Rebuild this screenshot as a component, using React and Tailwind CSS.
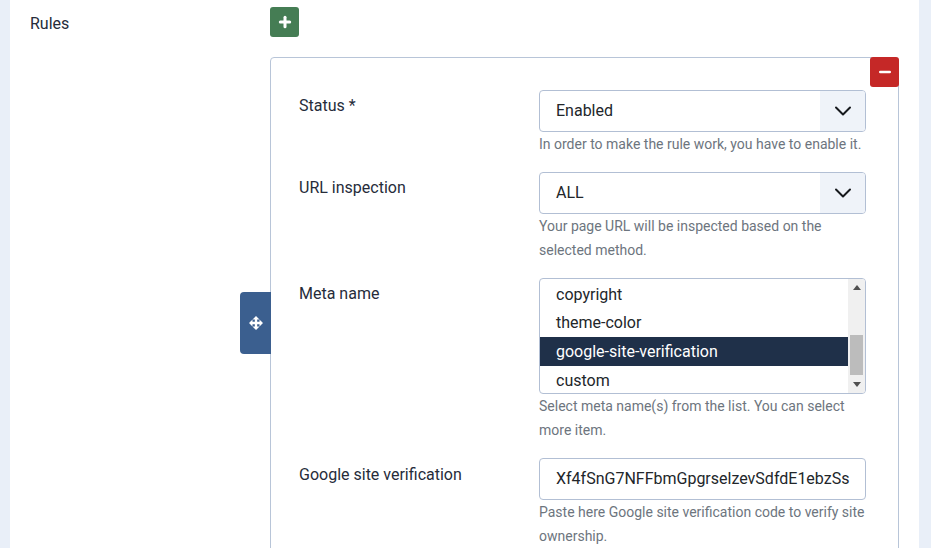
import { ChevronDown, Plus, Minus } from "lucide-react";

const Select = ({ value }) => (
  <div className="flex h-[42px] w-[327px] items-stretch overflow-hidden rounded-[4px] border border-[#b2bfd4] bg-white">
    <div className="flex flex-1 items-center pl-4 text-[16px] text-[#22262a]">{value}</div>
    <div className="flex w-[45px] items-center justify-center bg-[#eff3f9]">
      <ChevronDown className="size-[28px] text-[#16191d]" strokeWidth={1.7} />
    </div>
  </div>
);

const Help = ({ children }) => (
  <p className="w-[327px] text-[14px] leading-[24px] text-[#6d757e]">{children}</p>
);

const Row = ({ label, top, children }) => (
  <div className="flex">
    <div className={`w-[240px] text-[16px] leading-[24px] text-[#262c3a] ${top}`}>{label}</div>
    <div className="w-[327px]">{children}</div>
  </div>
);

const MoveIcon = () => (
  <svg viewBox="0 0 24 24" className="size-[14px]" fill="#fff">
    <path d="M12 0L18 6H14V10H18V6L24 12L18 18V14H14V18H18L12 24L6 18H10V14H6V18L0 12L6 6V10H10V6H6Z" />
  </svg>
);

export default function App() {
  return (
    <div className="h-[548px] overflow-hidden bg-[#e9eff8] pl-[10px] pr-[12px] font-['Roboto',sans-serif]">
      <div className="h-full bg-white pl-[20px]">
        <div className="flex">
          <div className="w-[240px] pt-[12px] text-[16px] leading-[24px] text-[#262c3a]">Rules</div>
          <div className="w-[629px] pt-[7px]">
            <button className="flex h-[30px] w-[29px] items-center justify-center rounded-[3px] bg-[#457d54]">
              <Plus className="size-[16px] text-white" strokeWidth={4.5} />
            </button>

            <div className="relative mt-[20px] h-[600px] rounded-[4px] border border-[#b8c5d8] pl-[28px] pt-[32px]">
              <button className="absolute -right-px -top-px flex h-[30px] w-[29px] items-center justify-center rounded-[3px] bg-[#c52827]">
                <Minus className="size-[16px] text-white" strokeWidth={4} />
              </button>
              <div className="absolute -left-[31px] top-[234px] flex h-[62px] w-[31px] items-center justify-center rounded-l-[4px] bg-[#3b5f8f]">
                <MoveIcon />
              </div>

              <Row label="Status *" top="pt-[4px]">
                <Select value="Enabled" />
                <Help>In order to make the rule work, you have to enable it.</Help>
              </Row>

              <div className="mt-[16px]">
                <Row label="URL inspection" top="pt-[4px]">
                  <Select value="ALL" />
                  <Help>Your page URL will be inspected based on the selected method.</Help>
                </Row>
              </div>

              <div className="mt-[16px]">
                <Row label="Meta name" top="pt-[4px]">
                  <div className="flex h-[116px] w-[327px] overflow-hidden rounded-[4px] border border-[#b2bfd4] bg-white text-[16px] text-[#22262a]">
                    <div className="flex-1 pt-[1px]">
                      <div className="flex h-[29px] items-center pl-4">copyright</div>
                      <div className="flex h-[28px] items-center pl-4">theme-color</div>
                      <div className="flex h-[29px] items-center bg-[#1f3049] pl-4 text-white">google-site-verification</div>
                      <div className="flex h-[29px] items-center pl-4">custom</div>
                    </div>
                    <div className="flex w-[17px] flex-col items-center bg-[#f0f0f0] pt-[6px]">
                      <div className="h-0 w-0 border-x-[4px] border-b-[5px] border-x-transparent border-b-[#505050]" />
                      <div className="mt-[45px] h-[40px] w-[13px] bg-[#bcbcbc]" />
                      <div className="mt-[7px] h-0 w-0 border-x-[4px] border-t-[5px] border-x-transparent border-t-[#505050]" />
                    </div>
                  </div>
                  <Help>Select meta name(s) from the list. You can select more item.</Help>
                </Row>
              </div>

              <div className="mt-[16px]">
                <Row label="Google site verification" top="pt-[5px]">
                  <div className="flex h-[42px] w-[327px] items-center overflow-hidden whitespace-nowrap rounded-[4px] border border-[#b2bfd4] bg-white pl-4 text-[16px] text-[#22262a]">
                    Xf4fSnG7NFFbmGpgrselzevSdfdE1ebzSs
                  </div>
                  <Help>Paste here Google site verification code to verify site ownership.</Help>
                </Row>
              </div>
            </div>
          </div>
        </div>
      </div>
    </div>
  );
}
